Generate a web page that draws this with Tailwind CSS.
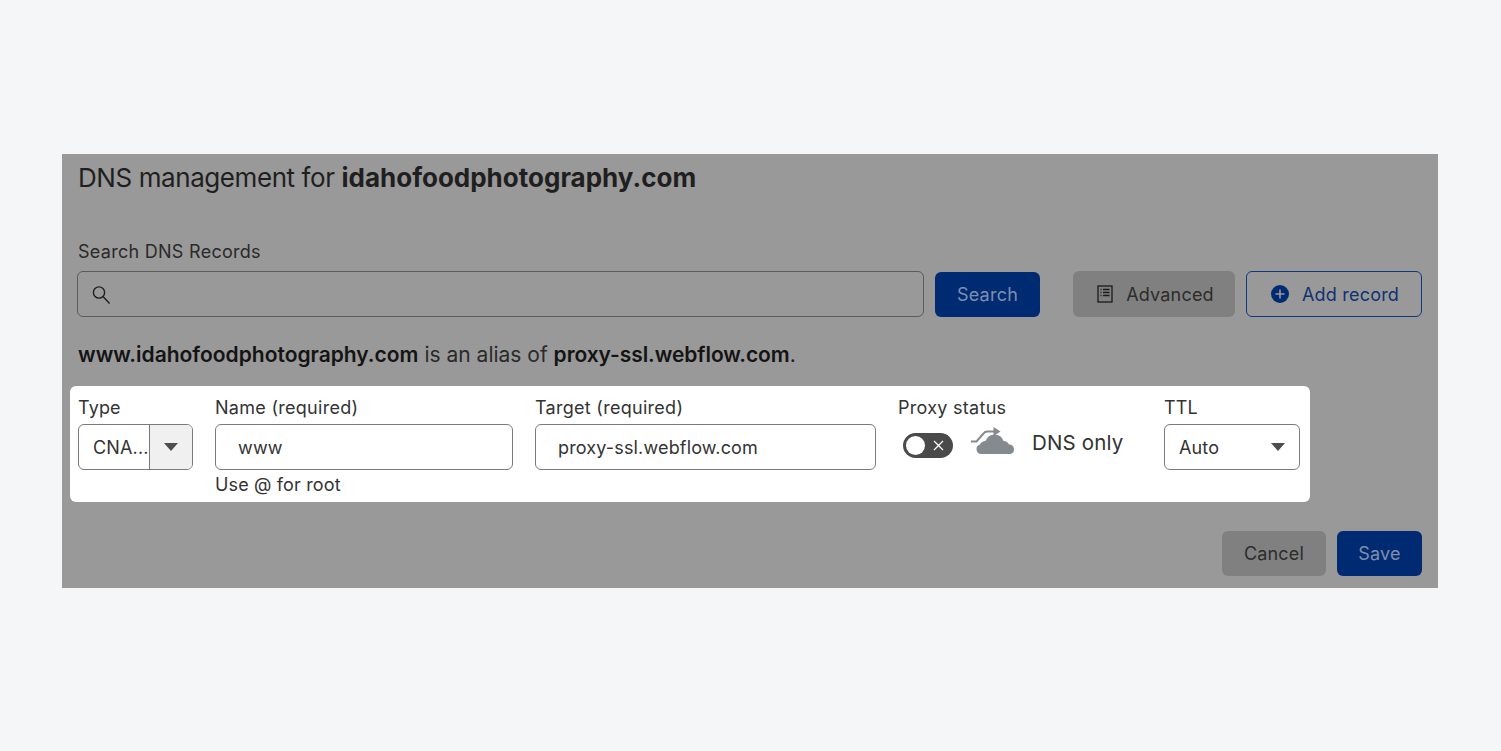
<!DOCTYPE html>
<html lang="en">
<head>
    <title>DNS management</title>
    <script src="https://cdn.jsdelivr.net/npm/@tailwindcss/browser@4"></script>
</head>
<body class="bg-[#f5f6f8] h-[751px] overflow-hidden font-['Inter',sans-serif] text-[#222]">
<main class="pt-[154px] pl-[62px]">
    <div class="w-[1376px] h-[434px] bg-[#999999] text-[#1f1f1f]">
        <!-- heading -->
        <h1 class="pl-4 pt-[7px] h-[37px] text-[26px] leading-[34px] tracking-[-0.42px]">DNS management for <b class="font-bold tracking-[0px]">idahofoodphotography.com</b></h1>

        <div class="pl-4 mt-[50px] h-[22px] text-[18px] leading-[22px] tracking-[0.28px] text-[#2a2a2a]">Search DNS Records</div>

        <!-- search row -->
        <div class="flex items-center mt-[8px] pl-[15px] h-[46px]">
            <div class="w-[847px] h-[46px] rounded-[6px] border border-[#5c5c5c] flex items-center pl-[14px]">
                <svg class="w-[19px] h-[19px]" viewBox="0 0 19 19" fill="none" stroke="#1f1f1f" stroke-width="1.4"><circle cx="7" cy="7.5" r="5.6"/><path d="M11 11.6 17.6 18.4"/></svg>
            </div>
            <button class="ml-[11px] w-[105px] h-[45px] rounded-[6px] bg-[#002b73] text-[#7e8eac] text-[18px] tracking-[0.25px]">Search</button>
            <button class="ml-[33px] w-[162px] h-[46px] rounded-[6px] bg-[#808080] flex items-center justify-center gap-[13px] pl-[3px] text-[18px] tracking-[0.2px] text-[#2c2c2c]">
                <svg class="w-[16px] h-[18px]" viewBox="0 0 16 18" fill="none" stroke="#1a1a1a" stroke-width="1.3"><rect x="1" y="1" width="14" height="16"/><path d="M3.5 4.5h1M6 4.5h6.5M3.5 7.5h1M6 7.5h6.5M3.5 10.5h1M6 10.5h6.5"/></svg>
                Advanced
            </button>
            <button class="ml-[11px] w-[176px] h-[46px] rounded-[6px] border-[1.5px] border-[#0d3a80] flex items-center justify-center gap-[13px] pl-[2px] text-[18px] tracking-[0.2px] text-[#0f3273]">
                <svg class="w-[18px] h-[18px]" viewBox="0 0 18 18"><circle cx="9" cy="9" r="9" fill="#002b73"/><path d="M9 4.5v9M4.5 9h9" stroke="#999999" stroke-width="1.6"/></svg>
                Add record
            </button>
        </div>

        <p class="pl-4 mt-[26px] h-[24px] text-[21px] leading-[24px]"><b class="font-semibold text-[#141414]">www.idahofoodphotography.com</b> <span class="text-[#2a2a2a]">is an alias of</span> <b class="font-semibold tracking-[-0.07px] text-[#141414]">proxy-ssl.webflow.com</b>.</p>

        <!-- highlighted record row -->
        <div class="ml-[8px] mt-[19px] w-[1240px] h-[116px] bg-white rounded-[6px] flex text-[18px] tracking-[0.15px] text-[#333] pl-[8px] pt-[11px]">
            <div class="w-[137px]">
                <div class="h-[22px] leading-[22px]">Type</div>
                <div class="mt-[5px] w-[115px] h-[46px] rounded-[6px] border border-[#7a7a7a] flex overflow-hidden">
                    <div class="w-[71px] pl-[14px] leading-[46px] border-r border-[#7a7a7a] whitespace-nowrap overflow-hidden">CNA...</div>
                    <div class="flex-1 bg-[#f0f0f0] flex items-center justify-center">
                        <div class="w-0 h-0 border-x-[7px] border-x-transparent border-t-[8px] border-t-[#4d4d4d]"></div>
                    </div>
                </div>
            </div>
            <div class="w-[320px]">
                <div class="h-[22px] leading-[22px] tracking-[0.28px]">Name (required)</div>
                <div class="mt-[5px] w-[298px] h-[46px] rounded-[6px] border border-[#7a7a7a] pl-[22px] leading-[46px]">www</div>
                <div class="mt-[4px] h-[22px] leading-[22px]">Use @ for root</div>
            </div>
            <div class="w-[363px]">
                <div class="h-[22px] leading-[22px] tracking-[0.28px]">Target (required)</div>
                <div class="mt-[5px] w-[341px] h-[46px] rounded-[6px] border border-[#7a7a7a] pl-[22px] leading-[46px]">proxy-ssl.webflow.com</div>
            </div>
            <div class="w-[266px]">
                <div class="h-[22px] leading-[22px] tracking-[0.28px]">Proxy status</div>
                <div class="flex items-center mt-[2px] ml-[5px] h-[40px]">
                    <div class="relative w-[50px] h-[25px] rounded-full bg-[#4a4a4a] mt-[9px]">
                        <div class="absolute left-[3px] top-[3px] w-[19px] h-[19px] rounded-full bg-white"></div>
                        <svg class="absolute left-[30px] top-[7px] w-[11px] h-[11px]" viewBox="0 0 11 11" stroke="#fff" stroke-width="1.2"><path d="M1 1l9 9M10 1l-9 9"/></svg>
                    </div>
                    <svg class="ml-[17px] mb-[1px] w-[44px] h-[27px]" viewBox="0 0 44 27" fill="#848a8e">
                        <path d="M11 27a4.8 4.8 0 0 1-1-9.4 6 6 0 0 1 5.5-3.6 10 10 0 0 1 9-6.5 9.5 9.5 0 0 1 9 6.5 6 6 0 0 1 5.5 3.6 4.8 4.8 0 0 1 1.5 9.4z"/>
                        <path d="M1 14.5h5.5l7-8c1-1.3 2.2-2 3.8-2h7" fill="none" stroke="#848a8e" stroke-width="2"/>
                        <path d="M23.5 0l7 4.5-7 4.5z"/>
                    </svg>
                    <span class="ml-[18px] mt-[5px] text-[20.5px]">DNS only</span>
                </div>
            </div>
            <div>
                <div class="h-[22px] leading-[22px]">TTL</div>
                <div class="mt-[5px] w-[136px] h-[46px] rounded-[6px] border border-[#7a7a7a] flex items-center justify-between pl-[14px] pr-[14px]">
                    <span>Auto</span>
                    <div class="w-0 h-0 border-x-[7px] border-x-transparent border-t-[8px] border-t-[#4d4d4d]"></div>
                </div>
            </div>
        </div>

        <!-- footer buttons -->
        <div class="flex justify-end gap-[11px] mt-[29px] pr-4">
            <button class="w-[104px] h-[45px] rounded-[6px] bg-[#808080] text-[18px] tracking-[0.2px] text-[#2c2c2c]">Cancel</button>
            <button class="w-[85px] h-[45px] rounded-[6px] bg-[#002b73] text-[18px] tracking-[0.2px] text-[#7e8eac]">Save</button>
        </div>
    </div>
</main>
</body>
</html>
